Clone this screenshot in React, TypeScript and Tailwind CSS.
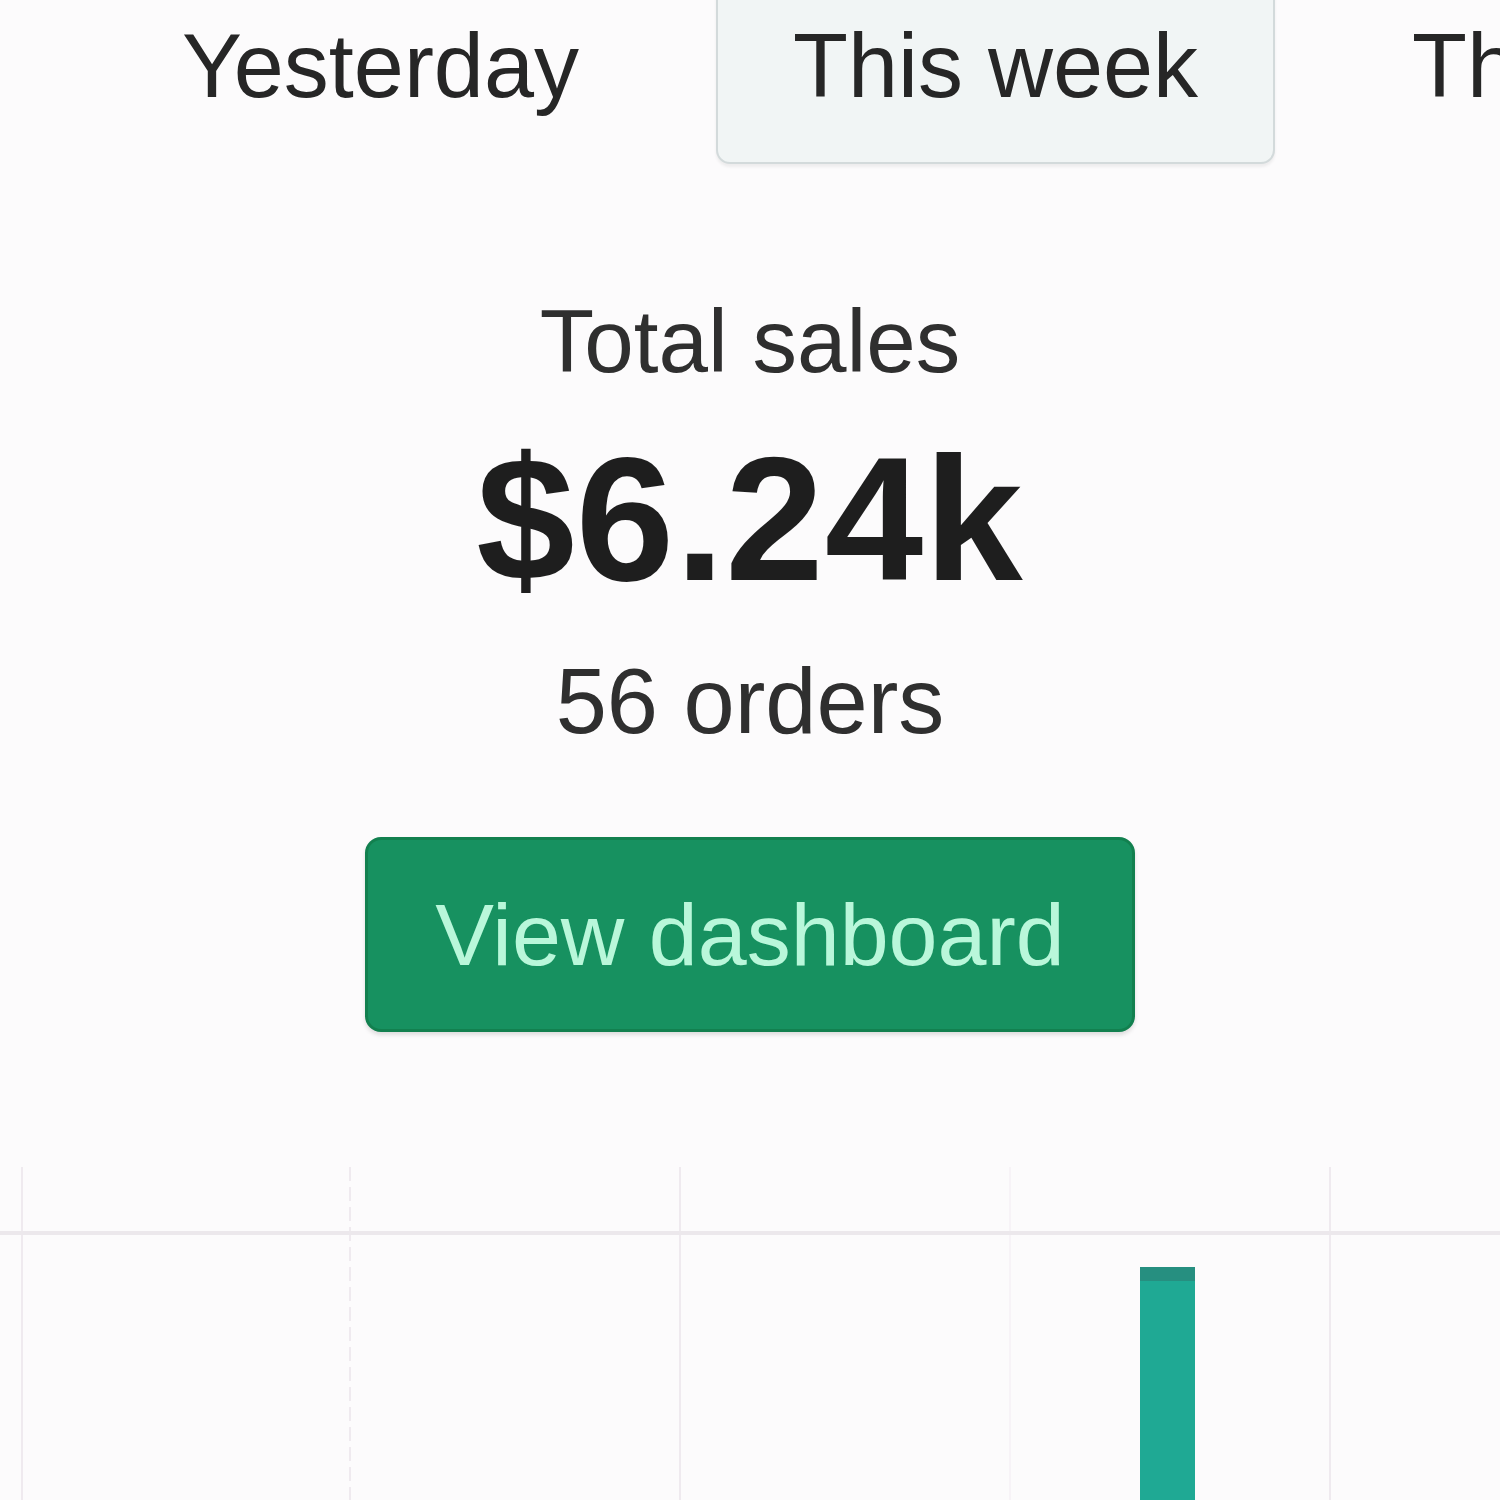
const tabs = ['Yesterday', 'This week', 'This month'];

function SalesChart() {
  return (
    <svg width="1500" height="335" viewBox="0 0 1500 335" className="block">
      {[22, 350, 680, 1010, 1330].map((x, i) => (
        <line
          key={x}
          x1={x}
          y1={0}
          x2={x}
          y2={335}
          stroke={i === 3 ? '#f7f3f7' : '#efeaef'}
          strokeWidth={2}
          strokeDasharray={i === 1 ? '14 6' : undefined}
        />
      ))}
      <line x1={0} y1={66} x2={1500} y2={66} stroke="#ece8ec" strokeWidth={4} />
      <rect x={1140} y={100} width={55} height={235} fill="#1fa994" />
      <rect x={1140} y={100} width={55} height={14} fill="#268f80" />
    </svg>
  );
}

export default function App() {
  return (
    <div className="w-[1500px] h-[1500px] overflow-hidden bg-[#fcfbfc] text-[#262626] font-['Liberation_Sans',Arial,sans-serif]">
      <div className="flex gap-[60px] pl-[105px] -mt-[32px] whitespace-nowrap">
        {tabs.map((tab) => (
          <button
            key={tab}
            className={`shrink-0 px-[75px] py-[46px] text-[90px] leading-[100px] rounded-b-[14px] border-2 ${
              tab === 'This week'
                ? 'bg-[#f1f5f5] border-[#d3dadb] shadow-[0_3px_3px_rgba(0,0,0,0.06)]'
                : 'border-transparent'
            }`}
          >
            {tab}
          </button>
        ))}
      </div>

      <div className="flex flex-col items-center">
        <div className="mt-[127px] text-[89px] leading-[100px] text-[#2f2f2f]">Total sales</div>
        <div className="mt-[40px] text-[177px] leading-[176px] font-bold text-[#1e1e1e] tracking-[1px]">
          $6.24k
        </div>
        <div className="mt-[44px] text-[92px] leading-[100px] text-[#2f2f2f]">56 orders</div>
        <button className="mt-[86px] w-[770px] h-[195px] rounded-[16px] bg-[#179160] border-[3px] border-[#12804f] text-[#b9f7da] text-[88px] leading-none shadow-[0_3px_4px_rgba(0,0,0,0.12)]">
          View dashboard
        </button>
      </div>

      <div className="mt-[135px]">
        <SalesChart />
      </div>
    </div>
  );
}
